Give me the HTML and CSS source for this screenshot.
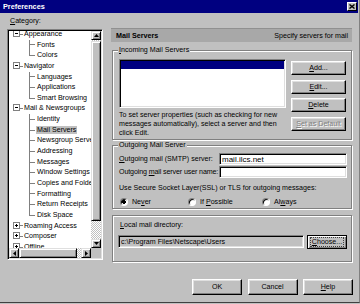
FILE: index.html
```html
<!DOCTYPE html>
<html lang="en">
<head>
    <meta charset="UTF-8">
    <title>Preferences</title>
    <link rel="stylesheet" href="styles.css">
</head>
<body>
<div class="window">
    <div class="titlebar">
        <span class="title">Preferences</span>
        <span class="close"><svg width="6" height="5" viewBox="0 0 6 5"><path d="M0.5 0.5L5.5 4.5M5.5 0.5L0.5 4.5" stroke="#000" stroke-width="1.4"/></svg></span>
    </div>

    <div class="main">
        <div class="left">
            <div class="cat-label"><u>C</u>ategory:</div>
            <div class="tree">
                <div class="tree-body">
                    <div class="tree-list">
                        <div class="row node"><span class="exp minus"></span>Appearance</div>
                        <div class="row leaf">Fonts</div>
                        <div class="row leaf last">Colors</div>
                        <div class="row node"><span class="exp minus"></span>Navigator</div>
                        <div class="row leaf">Languages</div>
                        <div class="row leaf">Applications</div>
                        <div class="row leaf last">Smart Browsing</div>
                        <div class="row node"><span class="exp minus"></span>Mail &amp; Newsgroups</div>
                        <div class="row leaf">Identity</div>
                        <div class="row leaf"><span class="sel">Mail Servers</span></div>
                        <div class="row leaf">Newsgroup Servers</div>
                        <div class="row leaf">Addressing</div>
                        <div class="row leaf">Messages</div>
                        <div class="row leaf">Window Settings</div>
                        <div class="row leaf">Copies and Folders</div>
                        <div class="row leaf">Formatting</div>
                        <div class="row leaf">Return Receipts</div>
                        <div class="row leaf last">Disk Space</div>
                        <div class="row node"><span class="exp plus"></span>Roaming Access</div>
                        <div class="row node"><span class="exp plus"></span>Composer</div>
                        <div class="row node"><span class="exp plus"></span>Offline</div>
                        <div class="row node"><span class="exp plus"></span>Advanced</div>
                    </div>
                </div>
                <div class="vscroll">
                    <span class="sb-btn"><svg width="5" height="3" viewBox="0 0 5 3"><path d="M2.5 0L5 3H0z"/></svg></span>
                    <div class="track v-track"><span class="thumb v-thumb"></span></div>
                    <span class="sb-btn"><svg width="5" height="3" viewBox="0 0 5 3"><path d="M0 0H5L2.5 3z"/></svg></span>
                </div>
                <div class="hscroll">
                    <span class="sb-btn"><svg width="3" height="5" viewBox="0 0 3 5"><path d="M0 2.5L3 0V5z"/></svg></span>
                    <div class="track h-track"><span class="thumb h-thumb"></span></div>
                    <span class="sb-btn"><svg width="3" height="5" viewBox="0 0 3 5"><path d="M0 0L3 2.5L0 5z"/></svg></span>
                </div>
                <div class="corner"></div>
            </div>
        </div>

        <div class="right">
            <div class="page-head">
                <b>Mail Servers</b>
                <span>Specify servers for mail</span>
            </div>

            <fieldset class="group incoming">
                <legend><u>I</u>ncoming Mail Servers</legend>
                <div class="in-wrap">
                    <div class="in-main">
                        <div class="server-list">
                            <div class="server-row"></div>
                        </div>
                        <p class="hint">To set server properties (such as checking for new<br>messages automatically), select a server and then<br>click Edit.</p>
                    </div>
                    <div class="in-buttons">
                        <button class="btn"><u>A</u>dd...</button>
                        <button class="btn"><u>E</u>dit...</button>
                        <button class="btn"><u>D</u>elete</button>
                        <button class="btn" disabled><u>S</u>et as Default</button>
                    </div>
                </div>
            </fieldset>

            <fieldset class="group outgoing">
                <legend>Outgoing Mail Server</legend>
                <div class="smtp-grid">
                    <label for="smtp"><u>O</u>utgoing mail (SMTP) server:</label>
                    <input class="field smtp" id="smtp" type="text" value="mail.ilcs.net">
                    <label for="smtp-user" class="tight">Outgoing <u>m</u>ail server user name:</label>
                    <input class="field" id="smtp-user" type="text">
                </div>
                <p class="ssl-note">Use Secure Socket Layer(SSL) or TLS for outgoing messages:</p>
                <div class="radios">
                    <span class="radio-opt"><span class="radio on"></span><span>Ne<u>v</u>er</span></span>
                    <span class="radio-opt"><span class="radio"></span><span>If <u>P</u>ossible</span></span>
                    <span class="radio-opt"><span class="radio"></span><span>Al<u>w</u>ays</span></span>
                </div>
            </fieldset>

            <div class="group local">
                <div class="local-label"><u>L</u>ocal mail directory:</div>
                <div class="local-row">
                    <input class="field readonly" type="text" value="c:\Program Files\Netscape\Users" readonly>
                    <button class="btn default"><span class="focus"><u>C</u>hoose...</span></button>
                </div>
            </div>
        </div>
    </div>

    <div class="footer">
        <button class="btn big">OK</button>
        <button class="btn big">Cancel</button>
        <button class="btn big"><u>H</u>elp</button>
    </div>
</div>
</body>
</html>
```

FILE: styles.css
```css
* {
    box-sizing: border-box;
}
body {
    margin: 0;
    font-family: "Liberation Sans", Arial, sans-serif;
    font-size: 7.1px;
    color: #000;
    background: #c0c0c0;
}
u {
    text-decoration-thickness: 1px;
}

.window {
    width: 360px;
    height: 303px;
    background: #c0c0c0;
    border-right: 1px solid #808080;
    border-bottom: 1px solid #404040;
    display: flex;
    flex-direction: column;
}

/* title bar */
.titlebar {
    height: 13px;
    margin-right: 1px;
    padding: 0 1px 0 3px;
    background: #000080;
    display: flex;
    align-items: center;
    justify-content: space-between;
}
.title {
    color: #fff;
    font-weight: bold;
    font-size: 7.3px;
}
.close {
    width: 10px;
    height: 9px;
    background: #c0c0c0;
    border: 1px solid;
    border-color: #fff #000 #000 #fff;
    display: flex;
    align-items: center;
    justify-content: center;
}

.main {
    display: flex;
    height: 249px;
}

/* category tree */
.left {
    width: 96px;
    margin-left: 7px;
    padding-top: 4px;
}
.cat-label {
    line-height: 8px;
    margin-left: 3px;
}
.tree {
    margin-top: 4px;
    height: 231px;
    padding: 1px;
    background: #fff;
    border: 1px solid;
    border-color: #808080 #fff #fff #808080;
    box-shadow: inset 1px 1px #000, inset -1px -1px #dfdfdf;
    display: grid;
    grid-template-columns: 82px 10px;
    grid-template-rows: 217px 10px;
}
.tree-body {
    overflow: hidden;
}
.tree-list {
    margin-top: -2px;
}
.row {
    height: 10.65px;
    line-height: 10.65px;
    white-space: nowrap;
}
.node {
    padding-left: 4px;
    background: linear-gradient(#808080, #808080) 11px 50% / 3px 1px no-repeat;
}
.exp {
    display: inline-block;
    width: 7px;
    height: 7px;
    margin-right: 4px;
    vertical-align: -1px;
    border: 1px solid #808080;
    background: linear-gradient(#000, #000) center / 3px 1px no-repeat, #fff;
}
.exp.plus {
    background: linear-gradient(#000, #000) center / 3px 1px no-repeat,
        linear-gradient(#000, #000) center / 1px 3px no-repeat, #fff;
}
.leaf {
    padding-left: 28px;
    background: linear-gradient(#808080, #808080) 20px 0 / 1px 100% no-repeat,
        linear-gradient(#808080, #808080) 20px 50% / 6px 1px no-repeat;
}
.leaf.last {
    background-size: 1px 50%, 6px 1px;
}
.sel {
    display: inline-block;
    margin-left: -1px;
    padding: 0 1px;
    line-height: 8.5px;
    background: #c0c0c0;
}

/* scrollbars */
.vscroll,
.hscroll {
    display: flex;
}
.vscroll {
    flex-direction: column;
}
.sb-btn,
.thumb {
    flex: none;
    background: #c0c0c0;
    border: 1px solid;
    border-color: #dfdfdf #000 #000 #dfdfdf;
    box-shadow: inset 1px 1px #fff, inset -1px -1px #808080;
}
.sb-btn {
    width: 10px;
    height: 10px;
    display: flex;
    align-items: center;
    justify-content: center;
}
.vscroll .sb-btn {
    height: 9px;
}
.track {
    flex: 1;
    display: flex;
    background: repeating-conic-gradient(#c0c0c0 0 25%, #fff 0 50%) 0 0 / 2px 2px;
}
.v-track {
    flex-direction: column;
}
.v-thumb {
    height: 180px;
    margin-top: 1px;
}
.h-thumb {
    width: 58px;
}
.corner {
    background: #c0c0c0;
}

/* right panel */
.right {
    width: 241px;
    margin-left: 8px;
    padding-top: 15px;
}
.page-head {
    height: 14px;
    padding: 0 4px 0 5px;
    background: #a8a8a8;
    border-top: 1px solid #909090;
    display: flex;
    align-items: center;
    justify-content: space-between;
}
.page-head b {
    font-size: 7.2px;
}

.group {
    width: 240px;
    margin: 0 0 0 1px;
    border: 1px solid #808080;
    box-shadow: inset 1px 1px #fff, 1px 1px #fff;
    min-width: 0;
}
legend {
    padding: 0 1px;
    margin-left: -1px;
    line-height: 8px;
    background: #c0c0c0;
}
.incoming {
    margin-top: 4px;
    padding: 5px 5px 1px 6px;
}
.in-wrap {
    display: flex;
    gap: 5px;
}
.in-main {
    width: 167px;
}
.server-list {
    height: 49px;
    padding: 1px;
    background: #fff;
    border: 1px solid;
    border-color: #808080 #fff #fff #808080;
    box-shadow: inset 1px 1px #000, inset -1px -1px #dfdfdf;
}
.server-row {
    height: 8px;
    background: #000080;
}
.hint {
    margin: 3px 0 0;
    line-height: 9px;
    white-space: nowrap;
}
.in-buttons {
    width: 55px;
    padding-top: 2px;
    display: flex;
    flex-direction: column;
    gap: 4.5px;
}

.btn {
    height: 14px;
    padding: 0;
    font: inherit;
    color: #000;
    white-space: nowrap;
    background: #c0c0c0;
    border: 1px solid;
    border-color: #fff #000 #000 #fff;
    box-shadow: inset -1px -1px #808080, inset 1px 1px #dfdfdf;
}
.btn:disabled {
    color: #808080;
    text-shadow: 1px 1px #fff;
}

.outgoing {
    margin-top: 1px;
    padding: 4px 5px 2px 6px;
}
.smtp-grid {
    display: grid;
    grid-template-columns: 100px 128px;
    grid-template-rows: 12px 12px;
    row-gap: 1px;
    align-items: center;
}
.smtp-grid label {
    white-space: nowrap;
}
.smtp-grid .tight {
    letter-spacing: -0.12px;
}
.field {
    height: 12px;
    width: 100%;
    padding: 0 2px;
    font: inherit;
    color: #000;
    background: #fff;
    border: 1px solid;
    border-color: #808080 #fff #fff #808080;
    box-shadow: inset 1px 1px #000, inset -1px -1px #dfdfdf;
    outline: none;
}
.field.smtp {
    font-size: 8px;
}
.ssl-note {
    margin: 6px 0 0;
    line-height: 8px;
    white-space: nowrap;
}
.radios {
    margin-top: 6px;
    padding-left: 1px;
    display: grid;
    grid-template-columns: 68px 74px 1fr;
    line-height: 8px;
}
.radio-opt {
    display: flex;
    align-items: center;
    gap: 4px;
}
.radio {
    flex: none;
    width: 8px;
    height: 8px;
    border-radius: 50%;
    border: 1px solid;
    border-color: #808080 #fff #fff #808080;
    background: #fff;
    box-shadow: inset 1px 1px #000;
}
.radio.on {
    background: radial-gradient(circle, #000 0 1.6px, #fff 1.8px);
}

.local {
    margin-top: 6px;
    padding: 5px 4px 12px 5px;
}
.local-label {
    margin-left: 2px;
    line-height: 8px;
}
.local-row {
    margin-top: 6px;
    display: flex;
    align-items: flex-start;
    gap: 3px;
}
.field.readonly {
    width: 186px;
    height: 13px;
    background: #c0c0c0;
}
.btn.default {
    width: 40px;
    padding: 1px 2px;
    border-color: #000;
    box-shadow: inset 1px 1px #fff, inset -1px -1px #808080;
}
.focus {
    display: block;
    height: 10px;
    line-height: 8px;
    border: 1px dotted #404040;
}

/* dialog buttons */
.footer {
    padding: 17px 6px 0 0;
    display: flex;
    justify-content: flex-end;
    gap: 5.5px;
}
.btn.big {
    width: 50px;
    height: 16px;
}
```
